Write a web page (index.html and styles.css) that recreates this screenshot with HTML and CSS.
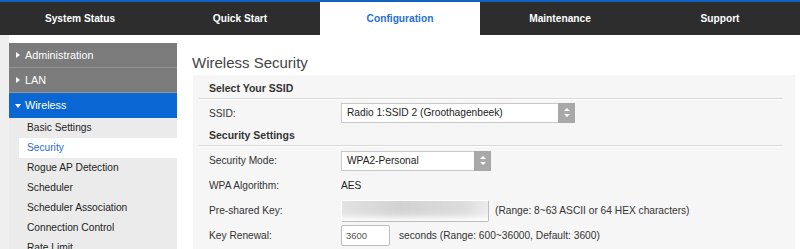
FILE: index.html
```html
<!DOCTYPE html>
<html lang="en">
<head>
  <meta charset="UTF-8" />
  <title>Wireless Security</title>
  <link rel="stylesheet" href="styles.css">
</head>
<body>
  <div class="topnav">
    <a class="tab">System Status</a>
    <a class="tab">Quick Start</a>
    <a class="tab active">Configuration</a>
    <a class="tab">Maintenance</a>
    <a class="tab">Support</a>
  </div>

  <div class="layout">
    <aside class="sidebar">
      <div class="menu-item">Administration</div>
      <div class="menu-item">LAN</div>
      <div class="menu-item open">Wireless</div>
      <ul class="submenu">
        <li>Basic Settings</li>
        <li class="active">Security</li>
        <li>Rogue AP Detection</li>
        <li>Scheduler</li>
        <li>Scheduler Association</li>
        <li>Connection Control</li>
        <li>Rate Limit</li>
      </ul>
    </aside>

    <main class="content">
      <h1>Wireless Security</h1>
      <div class="panel">
        <div class="section-title">Select Your SSID</div>
        <div class="row">
          <label>SSID:</label>
          <div class="select ssid-select">Radio 1:SSID 2 (Groothagenbeek)<span class="arrows"></span></div>
        </div>
        <div class="section-title">Security Settings</div>
        <div class="row">
          <label>Security Mode:</label>
          <div class="select mode-select">WPA2-Personal<span class="arrows"></span></div>
        </div>
        <div class="row">
          <label>WPA Algorithm:</label>
          <span class="value">AES</span>
        </div>
        <div class="row">
          <label>Pre-shared Key:</label>
          <div class="input key-input"><span class="blurred"></span></div>
          <span class="hint">(Range: 8~63 ASCII or 64 HEX characters)</span>
        </div>
        <div class="row">
          <label>Key Renewal:</label>
          <div class="input renewal-input">3600</div>
          <span class="hint">seconds (Range: 600~36000, Default: 3600)</span>
        </div>
      </div>
    </main>
  </div>
</body>
</html>
```

FILE: styles.css
```css
body {
  margin: 0;
  font-family: "Liberation Sans", Arial, sans-serif;
  font-size: 10.2px;
  color: #333;
  background: #fff;
  overflow: hidden;
}

/* top navigation */
.topnav {
  display: grid;
  grid-template-columns: repeat(5, 160px);
  height: 33px;
  background: #2d2d2d;
  border-top: 2px solid #1262c6;
}
.tab {
  display: flex;
  justify-content: center;
  align-items: center;
  color: #fff;
  font-weight: bold;
  font-size: 10.2px;
}
.tab.active {
  background: #fff;
  color: #1f6fd8;
}

.layout {
  display: flex;
  border-left: 9px solid #efefef;
  height: 214px;
}

/* left menu */
.sidebar {
  width: 168px;
  margin-top: 8px;
  flex-shrink: 0;
}
.menu-item {
  position: relative;
  height: 24px;
  line-height: 24px;
  padding-left: 16px;
  background: #7b7b7b;
  border-bottom: 1px solid #959595;
  color: #fff;
  font-size: 10.8px;
}
.menu-item::before {
  content: "";
  position: absolute;
  left: 7px;
  top: 9px;
  border-left: 4px solid #fff;
  border-top: 3px solid transparent;
  border-bottom: 3px solid transparent;
}
.menu-item.open {
  background: #0a66d3;
  border-bottom: none;
  height: 25px;
}
.menu-item.open::before {
  left: 6px;
  top: 11px;
  border-top: 4px solid #fff;
  border-left: 3px solid transparent;
  border-right: 3px solid transparent;
  border-bottom: none;
}
.submenu {
  list-style: none;
  margin: 0;
  padding: 0;
  background: #ebebeb;
}
.submenu li {
  height: 20px;
  line-height: 20px;
  padding-left: 18px;
  color: #222;
}
.submenu li.active {
  margin-left: 10px;
  margin-right: -14px;
  padding-left: 8px;
  background: #fff;
  color: #2a6bd0;
}

/* main area */
.content {
  flex: 1;
  padding: 0 5px 0 16px;
}
h1 {
  margin: 19px 0 4px -1px;
  font-size: 15px;
  line-height: 17px;
  font-weight: normal;
  color: #444;
}
.panel {
  background: #f6f6f6;
  padding: 3px 12px 0 6px;
  height: 200px;
}
.section-title {
  height: 20px;
  line-height: 20px;
  padding-left: 10px;
  font-weight: bold;
  font-size: 10.5px;
  border-bottom: 1px solid #d9d9d9;
  box-shadow: 0 1px 0 #fff;
}
.row {
  box-sizing: border-box;
  display: flex;
  align-items: center;
  height: 25px;
  padding-left: 10px;
}
.section-title + .row {
  height: 26px;
  padding-top: 2px;
}
.section-title + .row + .section-title + .row {
  height: 27px;
}
.row label {
  width: 132px;
  flex-shrink: 0;
}
.select {
  position: relative;
  height: 18px;
  line-height: 18px;
  padding-left: 5px;
  background: #fff;
  border: 1px solid #c9c9c9;
  color: #222;
}
.ssid-select { width: 227px; }
.mode-select { width: 143px; }
.arrows {
  position: absolute;
  right: -1px;
  top: -1px;
  width: 17px;
  height: 20px;
  background: #a8a8a8;
}
.arrows::before,
.arrows::after {
  content: "";
  position: absolute;
  left: 6px;
  border-left: 3px solid transparent;
  border-right: 3px solid transparent;
}
.arrows::before {
  top: 5px;
  border-bottom: 3px solid #fff;
}
.arrows::after {
  top: 11px;
  border-top: 3px solid #fff;
}
.input {
  height: 19px;
  line-height: 19px;
  background: #fff;
  border: 1px solid #bdbdbd;
  border-radius: 2px;
  overflow: hidden;
  position: relative;
  color: #555;
  font-size: 9.5px;
}
.key-input {
  width: 146px;
  height: 20px;
  border-top-color: transparent;
  border-left-color: transparent;
}
.blurred {
  position: absolute;
  left: -6px;
  top: -6px;
  width: 160px;
  height: 22px;
  background: linear-gradient(to right, #e4e4e4, #d2d2d2 40%, #dcdcdc 80%, #f2f2f2);
  filter: blur(3px);
}
.renewal-input {
  width: 43px;
  padding-left: 4px;
}
.value {
  color: #222;
}
.hint {
  margin-left: 6px;
  color: #333;
}
.renewal-input + .hint {
  margin-left: 9px;
}
```
